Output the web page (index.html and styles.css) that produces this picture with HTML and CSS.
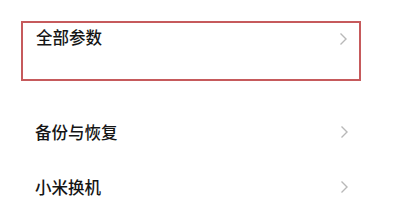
FILE: index.html
```html
<!DOCTYPE html>
<html lang="zh-CN">
<head>
    <meta charset="UTF-8">
    <meta name="viewport" content="width=device-width, initial-scale=1.0">
    <title>我的设备</title>
    <link rel="stylesheet" href="styles.css">
</head>
<body>
    <div class="setting_list">
        <!-- 高亮框选的一项 -->
        <div class="setting_item setting_item_marked">
            <span class="setting_title">全部参数</span>
            <svg class="arrow" width="9" height="14" viewBox="0 0 9 14"><path d="M1.5 1.5 L7 7 L1.5 12.5" /></svg>
        </div>
        <div class="setting_item">
            <span class="setting_title">备份与恢复</span>
            <svg class="arrow" width="9" height="14" viewBox="0 0 9 14"><path d="M1.5 1.5 L7 7 L1.5 12.5" /></svg>
        </div>
        <div class="setting_item">
            <span class="setting_title">小米换机</span>
            <svg class="arrow" width="9" height="14" viewBox="0 0 9 14"><path d="M1.5 1.5 L7 7 L1.5 12.5" /></svg>
        </div>
    </div>
</body>
</html>
```

FILE: styles.css
```css
html,body{
    padding:0;
    margin:0;
    width:100%;
    height:100%;
    background:#FFFFFF;
    font-family:"Noto Sans CJK SC", "Noto Sans", sans-serif;
}
.setting_list{
    display:flex;
    flex-direction:column;
    width:340px;
    padding:21px 0 0 21px;
}
.setting_item{
    display:flex;
    align-items:center;
    justify-content:space-between;
    box-sizing:border-box;
    height:55.5px;
    padding:0 12px 0 14px;
}
.setting_item_marked{
    align-items:flex-start;
    height:60px;
    margin-bottom:23px;
    padding:2px 11px 0 13px;
    border:2px solid #C65A5C;
}
.setting_title{
    font-size:16.5px;
    font-weight:500;
    line-height:24px;
    color:#151515;
}
.setting_item_marked .arrow{
    margin-top:7px;
}
.arrow path{
    fill:none;
    stroke:#B8B8B8;
    stroke-width:1.4;
}
```
